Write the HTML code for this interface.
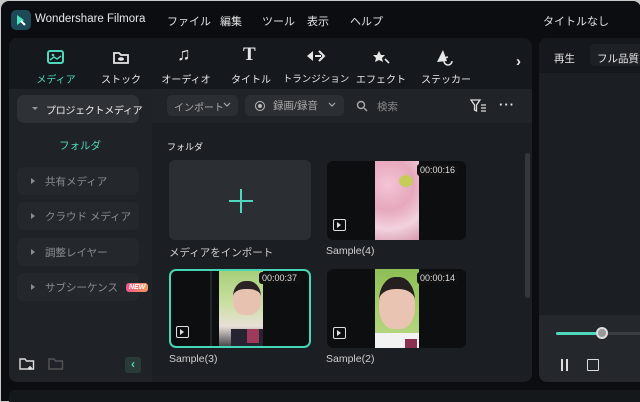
<!DOCTYPE html>
<html><head><meta charset="utf-8"><style>
*{box-sizing:border-box;margin:0;padding:0}
body{width:640px;height:400px;background:#c8c8c8;font-family:"Liberation Sans","Noto Sans CJK JP",sans-serif;overflow:hidden;position:relative}
.win{position:absolute;left:1px;top:1px;width:640px;height:400px;background:#0b0d10;border-radius:8px 8px 0 0}
.a{position:absolute;white-space:nowrap}
.t{position:absolute;color:#e6e6e6;font-size:11px;white-space:nowrap}
.menu{top:12px;font-size:11px;color:#e0e0e0}
.tool{position:absolute;top:70px;width:70px;text-align:center;font-size:10px;color:#e6e6e6;white-space:nowrap}
.side{position:absolute;left:16px;width:122px;height:28px;border-radius:7px;background:#24282c;color:#8a8e93;font-size:10.5px;padding:7px 0 0 28px;white-space:nowrap}
.side:before{content:"";position:absolute;left:14px;top:11px;border-left:4px solid #8a8e93;border-top:3px solid transparent;border-bottom:3px solid transparent}
.card{position:absolute;background:#0c0e10;border-radius:6px;overflow:hidden}
.dur{position:absolute;background:#111;color:#ddd;font-size:9px;padding:1px 3px;border-radius:3px}
.film{position:absolute;width:13px;height:12px;border:1.5px solid #ddd;border-radius:2px}
.film:after{content:"";position:absolute;left:3px;top:2px;border-left:4px solid #ddd;border-top:3px solid transparent;border-bottom:3px solid transparent}
.lbl{position:absolute;color:#d0d0d0;font-size:10.5px;white-space:nowrap}
</style></head><body>
<div class="win">
<div class="a" style="left:10px;top:9px;width:20px;height:20px;border-radius:5px;background:#1e4a57"></div>
<svg class="a" style="left:13px;top:12px" width="14" height="14"><path d="M3 2 L10 7 L3 12 Z" fill="#4fe0c0"/><path d="M7 8 L11 12" stroke="#fff" stroke-width="2"/></svg>
<div class="t" style="left:34px;top:12px;font-size:11.5px;color:#e8e8e8">Wondershare Filmora</div>
<div class="t menu" style="left:166px">ファイル</div>
<div class="t menu" style="left:219px">編集</div>
<div class="t menu" style="left:261px">ツール</div>
<div class="t menu" style="left:306px">表示</div>
<div class="t menu" style="left:349px">ヘルプ</div>
<div class="t menu" style="left:542px">タイトルなし</div>

<div class="a" style="left:8px;top:37px;width:523px;height:344px;background:#1b1e22;border-radius:8px;overflow:hidden">
 <div class="a" style="left:0;top:0;width:523px;height:51px;background:#15181c"></div>
 <div class="a" style="left:0;top:51px;width:143px;height:293px;background:#1f2327"></div>
 <div class="a" style="left:143px;top:51px;width:380px;height:34px;background:#202428"></div>
</div>
<svg class="a" style="left:45px;top:47px" width="20" height="18"><rect x="2" y="3" width="15" height="12" rx="2" fill="none" stroke="#4fd8bc" stroke-width="2"/><path d="M4 12 L8 9 L11 11 L15 8" stroke="#4fd8bc" stroke-width="1.5" fill="none"/><circle cx="7" cy="7" r="1.3" fill="#4fd8bc"/></svg>
<svg class="a" style="left:111px;top:48px" width="18" height="16"><path d="M2 4 h5 l2 2 h7 v8 h-14z" fill="none" stroke="#e6e6e6" stroke-width="1.8"/><ellipse cx="9" cy="10" rx="3" ry="1.8" fill="#e6e6e6"/></svg>
<div class="t" style="left:176px;top:43px;font-size:18px;color:#e6e6e6">♫</div>
<div class="t" style="left:242px;top:43px;font-size:19px;font-family:'Liberation Serif',serif;font-weight:bold;color:#e6e6e6">T</div>
<svg class="a" style="left:304px;top:46px" width="22" height="18"><path d="M2 9 L8 4 L8 14 Z" fill="#e6e6e6"/><path d="M10 9 h6 M14 4 l5 5 -5 5" stroke="#e6e6e6" stroke-width="2" fill="none"/></svg>
<svg class="a" style="left:369px;top:45px" width="22" height="20"><path d="M9 5 l2 4 4 0 -3 3 1 4 -4 -2 -4 2 1 -4 -3 -3 4 0z" fill="#e6e6e6"/><path d="M15 13 l4 4" stroke="#e6e6e6" stroke-width="1.6"/></svg>
<svg class="a" style="left:433px;top:46px" width="22" height="20"><path d="M3 15 L9 3 L13 14 Z" fill="#e6e6e6"/><path d="M14 10 a4 4 0 1 0 4 4" stroke="#e6e6e6" stroke-width="1.5" fill="none"/></svg>
<div class="tool" style="left:20px;color:#4fd8bc">メディア</div>
<div class="tool" style="left:85px">ストック</div>
<div class="tool" style="left:150px">オーディオ</div>
<div class="tool" style="left:215px">タイトル</div>
<div class="tool" style="left:280px;font-size:9.5px">トランジション</div>
<div class="tool" style="left:345px">エフェクト</div>
<div class="tool" style="left:410px">ステッカー</div>
<div class="t" style="left:515px;top:52px;font-size:15px;font-weight:bold">›</div>

<div class="a" style="left:16px;top:94px;width:122px;height:28px;border-radius:7px;background:#2e3236;color:#eee;font-size:10px;padding:7px 0 0 29px;letter-spacing:-0.3px">プロジェクトメディア</div>
<div class="a" style="left:31px;top:106px;border-top:3px solid #999;border-left:3px solid transparent;border-right:3px solid transparent"></div>
<div class="t" style="left:58px;top:137px;color:#4fd8bc;font-size:10.5px">フォルダ</div>
<div class="side" style="top:166px">共有メディア</div>
<div class="side" style="top:201px">クラウド メディア</div>
<div class="side" style="top:237px">調整レイヤー</div>
<div class="side" style="top:272px">サブシーケンス<span style="display:inline-block;margin-left:8px;background:linear-gradient(90deg,#f0578a,#f59a5c);color:#fff;font-size:7px;font-style:italic;font-weight:bold;padding:1px 3px;border-radius:3px;vertical-align:2px">NEW</span></div>
<svg class="a" style="left:18px;top:356px" width="16" height="14"><path d="M1 2 h5 l1.5 2 h7 v8 h-13.5z" fill="none" stroke="#ddd" stroke-width="1.4"/><path d="M11 9 v4 M9 11 h4" stroke="#ddd" stroke-width="1.4"/></svg>
<svg class="a" style="left:47px;top:356px" width="16" height="14"><path d="M1 2 h5 l1.5 2 h7 v8 h-13.5z" fill="none" stroke="#555" stroke-width="1.4"/></svg>
<div class="a" style="left:124px;top:356px;width:16px;height:16px;border-radius:3px;background:#2a3a36;color:#4fd8bc;font-size:12px;text-align:center;line-height:15px;font-weight:bold">‹</div>

<div class="a" style="left:166px;top:94px;width:71px;height:21px;border-radius:5px;background:#2b2f33;color:#aaa;font-size:10px;padding:4px 0 0 7px">インポート</div>
<svg class="a" style="left:222px;top:101px" width="8" height="6"><path d="M1 1 l3 3 3-3" stroke="#aaa" fill="none" stroke-width="1.2"/></svg>
<div class="a" style="left:244px;top:94px;width:99px;height:21px;border-radius:5px;background:#2b2f33;color:#aaa;font-size:10.5px;padding:3px 0 0 28px">録画/録音</div>
<svg class="a" style="left:327px;top:101px" width="8" height="6"><path d="M1 1 l3 3 3-3" stroke="#aaa" fill="none" stroke-width="1.2"/></svg>
<div class="a" style="left:254px;top:100px;width:10px;height:10px;border-radius:50%;border:1.5px solid #bbb"></div>
<div class="a" style="left:257px;top:103px;width:4px;height:4px;border-radius:50%;background:#bbb"></div>
<svg class="a" style="left:355px;top:99px" width="12" height="12"><circle cx="5" cy="5" r="3.5" stroke="#aaa" stroke-width="1.4" fill="none"/><path d="M8 8 l3 3" stroke="#aaa" stroke-width="1.4"/></svg>
<div class="t" style="left:376px;top:98px;color:#888;font-size:10.5px">検索</div>
<svg class="a" style="left:469px;top:98px" width="18" height="14"><path d="M1 1 h9 l-3.5 5 v6 l-2 -1 v-5z" fill="none" stroke="#ddd" stroke-width="1.3"/><path d="M11 6 h5 M11 9 h5 M11 12 h5" stroke="#ddd" stroke-width="1.2"/></svg>
<div class="t" style="left:498px;top:96px;font-size:13px;font-weight:bold;letter-spacing:1px">···</div>
<div class="t" style="left:166px;top:139px;font-size:9px;color:#eee">フォルダ</div>

<div class="a" style="left:168px;top:159px;width:142px;height:80px;border-radius:6px;background:#2b2f33"></div>
<div class="a" style="left:228px;top:199px;width:24px;height:2px;background:#4fd8bc"></div>
<div class="a" style="left:239px;top:188px;width:2px;height:24px;background:#4fd8bc"></div>
<div class="lbl" style="left:168px;top:244px">メディアをインポート</div>

<div class="card" style="left:326px;top:160px;width:139px;height:79px">
 <div class="a" style="left:48px;top:0;width:44px;height:79px;background:radial-gradient(circle at 30% 30%,#f4c4d6,#e6a8bc 40%,#f2d2de 70%,#d89aae)"></div>
 <div class="a" style="left:72px;top:14px;width:14px;height:12px;background:#c5cc5a;border-radius:50%"></div>
</div>
<div class="dur" style="left:416px;top:163px">00:00:16</div>
<div class="film" style="left:332px;top:218px"></div>
<div class="lbl" style="left:325px;top:244px">Sample(4)</div>

<div class="card" style="left:168px;top:268px;width:142px;height:79px;border:2px solid #45d6b5;border-radius:7px">
 <div class="a" style="left:39px;top:0;width:2px;height:79px;background:#232629"></div>
 <div class="a" style="left:48px;top:0;width:44px;height:79px;background:linear-gradient(180deg,#a7cf7a,#c9df9f 40%,#e8e0d8 70%,#2a2a33)"></div>
 <div class="a" style="left:62px;top:10px;width:28px;height:34px;border-radius:45% 45% 40% 40%;background:#e8c2b0;border-top:8px solid #2a2224"></div>
 <div class="a" style="left:60px;top:58px;width:32px;height:21px;background:#262430"></div>
 <div class="a" style="left:76px;top:58px;width:12px;height:14px;background:#a03a5c"></div>
</div>
<div class="dur" style="left:258px;top:271px">00:00:37</div>
<div class="film" style="left:175px;top:325px"></div>
<div class="lbl" style="left:168px;top:352px">Sample(3)</div>

<div class="card" style="left:326px;top:268px;width:139px;height:79px">
 <div class="a" style="left:48px;top:0;width:44px;height:79px;background:linear-gradient(180deg,#8ebe56,#a6cf6c 50%,#bcd88a)"></div>
 <div class="a" style="left:52px;top:8px;width:36px;height:52px;border-radius:45% 45% 40% 40%;background:#e9c4b2;border-top:12px solid #25201f"></div>
 <div class="a" style="left:48px;top:64px;width:44px;height:15px;background:#f2f2f2"></div>
 <div class="a" style="left:78px;top:70px;width:12px;height:9px;background:#8a3050"></div>
</div>
<div class="dur" style="left:416px;top:271px">00:00:14</div>
<div class="film" style="left:332px;top:326px"></div>
<div class="lbl" style="left:325px;top:352px">Sample(2)</div>

<div class="a" style="left:524px;top:152px;width:5px;height:145px;border-radius:3px;background:#34383c"></div>

<div class="a" style="left:538px;top:37px;width:110px;height:344px;border-radius:8px;background:#1b1e22;overflow:hidden">
 <div class="a" style="left:0;top:0;width:110px;height:35px;background:#15181c"></div>
 <div class="a" style="left:51px;top:6px;width:60px;height:22px;border-radius:5px;background:#1d2125"></div>
 <div class="a" style="left:0;top:277px;width:110px;height:67px;background:#24282c"></div>
</div>
<div class="t" style="left:553px;top:50px;font-size:10.5px">再生</div>
<div class="t" style="left:596px;top:50px;font-size:10.5px">フル品質</div>
<div class="a" style="left:555px;top:331px;width:46px;height:3px;background:#4fd8bc;border-radius:2px"></div>
<div class="a" style="left:601px;top:331px;width:40px;height:3px;background:#3a3e42"></div>
<div class="a" style="left:595px;top:326px;width:12px;height:12px;border-radius:50%;background:#999;border:2px solid #ddd"></div>
<div class="a" style="left:560px;top:358px;width:2px;height:12px;background:#ddd"></div>
<div class="a" style="left:565px;top:358px;width:2px;height:12px;background:#ddd"></div>
<div class="a" style="left:586px;top:358px;width:12px;height:12px;border:1.5px solid #ddd;border-radius:1px"></div>

<div class="a" style="left:8px;top:389px;width:640px;height:12px;background:#15181b;border-radius:6px 0 0 0"></div>
</div>
</body></html>
